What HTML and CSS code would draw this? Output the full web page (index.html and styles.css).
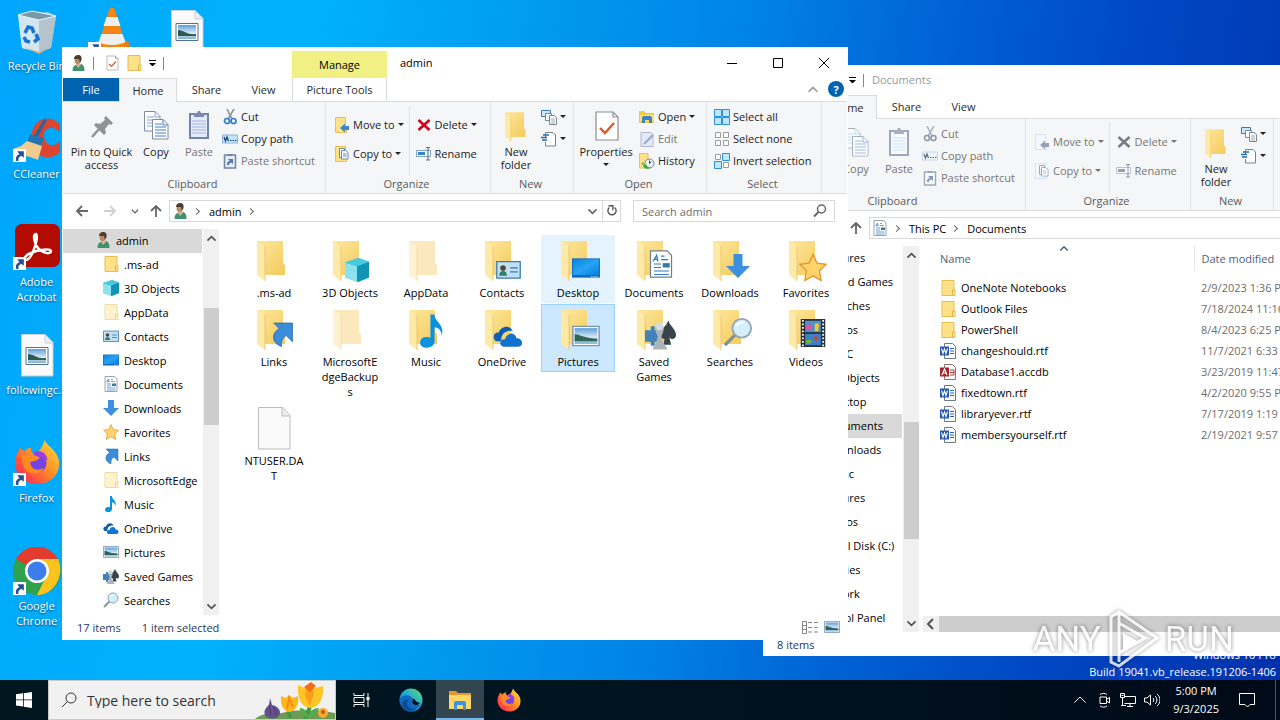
FILE: index.html
```html
<!DOCTYPE html>
<html lang="en">
<head>
  <meta charset="UTF-8">
  <meta name="viewport" content="width=device-width, initial-scale=1.0">
  <title>Desktop</title>
  <link rel="stylesheet" href="styles.css">
</head>
<body>
  <!-- Icon sprite -->
  <svg class="sprite" aria-hidden="true">
    <defs>
      <linearGradient id="g-folder" x1="0" y1="0" x2="1" y2="1"><stop offset="0" stop-color="#ffe79c"/><stop offset="1" stop-color="#f3cb5d"/></linearGradient>
      <linearGradient id="g-sky" x1="0" y1="0" x2="0" y2="1"><stop offset="0" stop-color="#5f9fdc"/><stop offset="0.6" stop-color="#dcecf7"/><stop offset="1" stop-color="#7fb0cf"/></linearGradient>
      <linearGradient id="g-fox" x1="1" y1="0" x2="0" y2="1"><stop offset="0" stop-color="#ffe23c"/><stop offset="0.45" stop-color="#ff9125"/><stop offset="0.8" stop-color="#ff3f48"/><stop offset="1" stop-color="#e5208a"/></linearGradient>
      <linearGradient id="g-edge" x1="0" y1="1" x2="1" y2="0"><stop offset="0" stop-color="#0b59b0"/><stop offset="0.5" stop-color="#22a8dd"/><stop offset="1" stop-color="#5fdc62"/></linearGradient>
      <linearGradient id="g-key" x1="0" y1="0" x2="1" y2="1"><stop offset="0" stop-color="#0a84e0"/><stop offset="0.5" stop-color="#25a3f5"/><stop offset="1" stop-color="#0a7edb"/></linearGradient>
    </defs>
    <symbol id="person" viewBox="0 0 16 16"><path d="M2.500 16c0-4 1.500-6 4.500-6.500L11 9c2.500.5 3.500 3 3.500 7z" fill="#3f9172"/><path d="M6 8h4l1 2-3 3-2-3z" fill="#d9b08c"/><ellipse cx="7.500" cy="5" rx="3" ry="4" fill="#b98a68"/><path d="M4 4c0-3 2-4 4-4 3 0 4 2 3.500 5L10 8 9 4z" fill="#4d3c31"/></symbol>
    <symbol id="folder" viewBox="0 0 16 16"><path d="M2 .5h12V10h1v5.500H2z" fill="#ffe187" stroke="#e6bd55"/><path d="M12.500 15v-5H14" fill="none" stroke="#e0b548"/></symbol>
    <symbol id="folder-pale" viewBox="0 0 16 16"><path d="M2 .5h12V10h1v5.500H2z" fill="#fff2cc" stroke="#ecdba6"/><path d="M12.500 15v-5H14" fill="none" stroke="#e8d49a"/></symbol>
    <symbol id="folder48" viewBox="0 0 48 48"><path d="M7 5h26v22l2 2v10H15z" fill="url(#g-folder)"/><path d="M7 5l8 5v35l-8-6z" fill="#ffe9a6"/><path d="M15 10v35" stroke="#e5bd57" stroke-width=".7"/></symbol>
    <symbol id="folder48-pale" viewBox="0 0 48 48"><path d="M7 5h26v22l2 2v10H15z" fill="#fbe9bd"/><path d="M7 5l8 5v35l-8-6z" fill="#fff2d2"/><path d="M15 10v35" stroke="#ecd8a2" stroke-width=".7"/></symbol>
    <symbol id="cube" viewBox="0 0 16 16"><path d="M0 3l9-3 7 2.500v10.500L9 16 0 13z" fill="#27b5d0"/><path d="M0 3l8 2.500V16L0 13z" fill="#8be3ef"/><path d="M8 5.500l8-3V13l-8 3z" fill="#1393b4"/><path d="M0 3l9-3 7 2.500-8 3z" fill="#48cbdf"/></symbol>
    <symbol id="contact" viewBox="0 0 16 16"><path d="M.5 3h15v10.500H.5z" fill="#bfe0f5" stroke="#3d7ba8" stroke-width=".8"/><path d="M2 12c0-2 1-3 2.500-3S7 10 7 12z" fill="#2f8068"/><circle cx="4.500" cy="7" r="1.800" fill="#5a4332"/><path d="M9 7h5M9 9.500h5" stroke="#3d7ba8" stroke-width=".8"/></symbol>
    <symbol id="desk" viewBox="0 0 16 16"><path d="M0 2.500h16v11H0z" fill="#0a6cc0"/><path d="M.5 3h15v9H.5z" fill="url(#g-key)"/><path d="M11 13h4" stroke="#fff" stroke-width=".6" stroke-dasharray=".6 .6"/></symbol>
    <symbol id="doc" viewBox="0 0 16 16"><path d="M2 .5h9.500L14 3v12.500H2z" fill="#fff" stroke="#72808c" stroke-width=".7"/><path d="M3.500 6.500L5.500 3l.8 3.500M4 5.300h2M8 3.500h2M8 5.500h4M4 8h4M4 10h4M4 12h8.500M4 14h8.500" fill="none" stroke="#2b7cc0" stroke-width=".7"/><path d="M9 7.500h4V10H9z" fill="#3878a8"/></symbol>
    <symbol id="down" viewBox="0 0 16 16"><path d="M5 0h6v8h5l-8 8-8-8h5z" fill="#3d8fe0"/></symbol>
    <symbol id="star" viewBox="0 0 16 16"><path d="M8 .5l2.300 5 5.200.7-3.800 3.700 1 5.600L8 12.800 3.300 15.500l1-5.600L.5 6.200l5.200-.7z" fill="#ffd36a" stroke="#e2922e" stroke-width=".7"/></symbol>
    <symbol id="linkarrow" viewBox="0 0 16 16"><path d="M3 1h12v12l-4-4c-3 2-3 4-3 7C2 14 1 8 6.500 4.500z" fill="#3a8ddb" stroke="#2567a5" stroke-width=".5"/></symbol>
    <symbol id="music" viewBox="0 0 16 16"><path d="M7 0h2c0 4 5 4.500 3.500 10-.5-3-2-3.500-3.500-3.800V13c0 4-7 4-7 .8C2 11 5 10.500 7 11.300z" fill="#0a93dd"/></symbol>
    <symbol id="cloud" viewBox="0 0 16 16"><path d="M1.500 11C-1 9 1 6 3 6.500 4 3 9 2 10.500 5.500 6 5 4 8 4.500 11z" fill="#0c5fb3"/><path d="M5.500 14C2.500 13 4 9.500 6.500 10 7 6.500 12 6 12.500 9.500c3-.5 4.500 4 1 4.500z" fill="#1272cf"/></symbol>
    <symbol id="picture" viewBox="0 0 16 16"><path d="M.5 2.500h15v11H.5z" fill="#fff" stroke="#7d96aa" stroke-width=".8"/><path d="M1.500 3.500h13v9h-13z" fill="url(#g-sky)"/><path d="M1.500 7c3 0 4 2 13 2.500V11h-13z" fill="#2f6659"/></symbol>
    <symbol id="games" viewBox="0 0 16 16"><path d="M0 6h3V4h2v2h3v6H5v2H3v-2H0z" fill="#4282ba"/><path d="M12 1c1 3 4 4.500 4 7.500 0 2-2.500 3-3.500 1l1 4h-4z" fill="#39434a"/><path d="M12 1c-1 3-4 4.500-4 7.500 0 2 3 3 4 1z" fill="#39434a"/><path d="M4 16c0-2 2-2 2.500-7C4 5 6 2.500 7.500 2.500S11 5 8.500 9c.5 5 3 5 3 7z" fill="#a9b5bb"/><circle cx="7.500" cy="4" r="2" fill="#d5dde1"/></symbol>
    <symbol id="search" viewBox="0 0 16 16"><path d="M1 15l6-6" stroke="#82909c" stroke-width="1.800"/><circle cx="10" cy="6" r="5" fill="#d3effc" stroke="#91a5b3"/><path d="M7 5c1-2 3-2 4-2" stroke="#fff" fill="none"/></symbol>
    <symbol id="film" viewBox="0 0 16 16"><path d="M1 0h14v16H1z" fill="#26303b"/><path d="M3.500 1h9v6.500h-9z" fill="#4d91ce"/><path d="M3.500 8.500h9V15h-9z" fill="#4080c8"/><path d="M2.200.5v15M13.800.5v15" stroke="#fff" stroke-dasharray="1 1"/><path d="M4 4l3-1v3H4z" fill="#ef4c97"/><path d="M9 2.500h2.500L11 7H9z" fill="#f1c72f"/><path d="M8 10h3l-1 3z" fill="#c94930"/><path d="M4 12h3v2H4z" fill="#6cb248"/></symbol>
    <symbol id="page" viewBox="0 0 48 48"><path d="M8.500 3.500H33l7 8v33.500H8.500z" fill="#fafafa" stroke="#bcbcbc"/><path d="M32 3.500v8.500h8" fill="#eee" stroke="#bcbcbc"/></symbol>
    <symbol id="image-page" viewBox="0 0 48 48"><path d="M8.500 3.500H32l8 8v33.500H8.500z" fill="#fafafa" stroke="#c6d0d6"/><path d="M32 3.500V12h8" fill="#e6eef4" stroke="#c6d0d6"/><path d="M13 16.500h22v17H13z" fill="#fff" stroke="#52719a"/><path d="M15 18h18v14H15z" fill="url(#g-sky)"/><path d="M15 23c6 0 8 5 18 4v2H15z" fill="#2d5b50"/></symbol>
    <symbol id="check-page" viewBox="0 0 16 16"><path d="M3 1h8.500L14 3.500V15H3z" fill="#fff" stroke="#8a8d92" stroke-width=".6"/><path d="M11.500 1v2.500H14" fill="none" stroke="#8a8d92" stroke-width=".6"/><path d="M5 9l2.500 2.500 4.500-5" fill="none" stroke="#e0562b" stroke-width="1.200"/></symbol>
    <symbol id="pin" viewBox="0 0 32 32"><path d="M20 6l7 7-2 2-2-1-4 5 1 4-2 2-10-10 2-2 4 1 5-4-1-2z" fill="#909497"/><path d="M13 19l-7 8" stroke="#909497" stroke-width="2.500"/></symbol>
    <symbol id="copy" viewBox="0 0 32 32"><path d="M4.500 1.500H15l5 5V21H4.500z" fill="#fff" stroke="#7e8ca0"/><path d="M15 1.500V7h5M7 7h7M7 10h10M7 13h10M7 16h10" stroke="#82a0dd" fill="none"/><path d="M12.500 9.500H23l5 5V29H12.500z" fill="#fff" stroke="#7e8ca0"/><path d="M23 9.500V15h5M15 14h7M15 17h11M15 20h11M15 23h11M15 26h11" stroke="#457bd0" fill="none"/></symbol>
    <symbol id="paste" viewBox="0 0 32 32"><path d="M7 4h18v24H7z" fill="#e3eafb" stroke="#7283a8" stroke-width="2"/><path d="M11 3h3l1-2h2l1 2h3v4H11z" fill="#7b8bab"/><path d="M9 11h14M9 14h14M9 17h14M9 20h14M9 23h14" stroke="#a9b7d6"/></symbol>
    <symbol id="cut" viewBox="0 0 16 16"><path d="M5 0l5 10M12 0L6 10" stroke="#8c9196" stroke-width="1.600"/><circle cx="5" cy="12" r="2.500" fill="none" stroke="#2b7fc7" stroke-width="1.700"/><circle cx="11.500" cy="12" r="2.500" fill="none" stroke="#2b7fc7" stroke-width="1.700"/></symbol>
    <symbol id="path" viewBox="0 0 16 16"><path d="M.5 4h15v8H.5z" fill="#c3e4fa" stroke="#86b6dc"/><path d="M2 6l1.500 4L5 6l1.500 4M8 9.500h1.500M10.500 9.500H12M13 9.500h1.500" stroke="#123e6b" stroke-width="1.200" fill="none"/></symbol>
    <symbol id="paste-link" viewBox="0 0 16 16"><path d="M2.500 2h11v13h-11z" fill="#e5ebf8" stroke="#7184a9" stroke-width="1.500"/><path d="M5.500 1h5v2h-5z" fill="#7184a9"/><path d="M5 12c0-3 1-4 3-4L6 6h5v5L9.500 9.500C7 10 7 11 7 12z" fill="#5a73a8"/></symbol>
    <symbol id="move" viewBox="0 0 16 16"><path d="M1.500.5h10V12h1v3.500h-11z" fill="#ffe187" stroke="#e8c15d"/><path d="M15 9v4h-4v2.500L6 11l5-4.500V9z" fill="#3a87cc"/></symbol>
    <symbol id="copyto" viewBox="0 0 16 16"><path d="M1.500.5h10V12h1v3.500h-11z" fill="#ffe187" stroke="#e8c15d"/><path d="M5.500 2.500h5v9h-5z" fill="#fff" stroke="#6e88a7"/><path d="M7.500 4.500h4l2.500 2V13H7.500z" fill="#fff" stroke="#6e88a7"/><path d="M9 8h3.500M9 10h3.500" stroke="#4b82cf"/></symbol>
    <symbol id="delete" viewBox="0 0 16 16"><path d="M2.500 3l11 10M13.500 3L2.500 13" stroke="currentColor" stroke-width="2.700"/></symbol>
    <symbol id="rename" viewBox="0 0 16 16"><path d="M.5 4.500h14v6H.5z" fill="#fff" stroke="#7ba6cb"/><path d="M2 6h7v3H2z" fill="#3b83c5"/><path d="M10 1.500h4M12 1.500v12.500M10 14h4" stroke="#667784" stroke-width="1.200"/></symbol>
    <symbol id="new-item" viewBox="0 0 16 16"><path d="M.5 1.500h9v6h-9z" fill="#cce7f8" stroke="#3a7cab"/><path d="M4.500 4.500h6v7h-6z" fill="#fff" stroke="#788994"/><path d="M8.500 6.500H13l2.500 2v7h-7z" fill="#fff" stroke="#788994"/><path d="M10 10h4M10 12h4M10 14h4" stroke="#9ba9b3"/></symbol>
    <symbol id="easy" viewBox="0 0 16 16"><path d="M4.500 6V1.500H12L14.500 4v11h-10V11" fill="#fff" stroke="#75838e"/><path d="M2 4h6M0 6.500h6M1 9h5" stroke="#276ca6" stroke-width="1.300"/></symbol>
    <symbol id="open" viewBox="0 0 16 16"><path d="M0 2h5l1.500 2H15v10H0z" fill="#f3c94c"/><path d="M1 6h14v6H1z" fill="#ffdf78"/><path d="M3 14V9c0-1 1-2 2-2h6c1 0 2 1 2 2v5h-3v-3H6v3z" fill="#3983c8"/></symbol>
    <symbol id="edit" viewBox="0 0 16 16"><path d="M2 1.500h10l2 2v12H2z" fill="#e4e9f6" stroke="#aeb9cf"/><path d="M5 13L14 4" stroke="#97a7c7" stroke-width="2"/></symbol>
    <symbol id="history" viewBox="0 0 16 16"><path d="M.5.5H9V11h1.500v4H.5z" fill="#ffe187" stroke="#e8c15d"/><circle cx="10.500" cy="10.500" r="4.500" fill="#ebf3f5" stroke="#71878a"/><path d="M10.500 7.500v3l2-2" stroke="#445" fill="none"/><path d="M8 6L4 9l1 3 2-1c1 3 3 4 5 3.500-5 3-8 0-8-3l-2-.5z" fill="#2eab46"/></symbol>
    <symbol id="sel-all" viewBox="0 0 16 16"><path d="M.5.5h7v7h-7zM8.500.5h7v7h-7zM.5 8.500h7v7h-7zM8.500 8.500h7v7h-7z" fill="#bde5fb" stroke="#2f91d5"/></symbol>
    <symbol id="sel-none" viewBox="0 0 16 16"><path d="M1.500 1.500h5v5h-5zM9.500 1.500h5v5h-5zM1.500 9.500h5v5h-5zM9.500 9.500h5v5h-5z" fill="#fff" stroke="#9b9b9b"/></symbol>
    <symbol id="sel-inv" viewBox="0 0 16 16"><path d="M1.500 1.500h5v5h-5zM9.500 9.500h5v5h-5z" fill="#fff" stroke="#9b9b9b"/><path d="M8.500.5h7v7h-7zM.5 8.500h7v7h-7z" fill="#bde5fb" stroke="#2f91d5"/></symbol>
    <symbol id="word" viewBox="0 0 16 16"><path d="M4.500.5h8l3 3v12h-11z" fill="#fff" stroke="#6d7986"/><path d="M10 5.500h4M10 8h4M10 10.500h4" stroke="#2b62b5"/><path d="M0 3.500h9v9H0z" fill="#2458ae"/><path d="M1.500 5.500L3 10.500 4.500 6 6 10.500l1.500-5" stroke="#fff" fill="none" stroke-width="1.100"/></symbol>
    <symbol id="access" viewBox="0 0 16 16"><path d="M4.500.5h8l3 3v12h-11z" fill="#fff" stroke="#8d6e72"/><path d="M10 6h4v5h-4M10 8.500h4" stroke="#a4373a" fill="none"/><path d="M0 3.500h9v9H0z" fill="#a4262c"/><path d="M2 11l2.500-6L7 11M3 9h3" stroke="#fff" fill="none" stroke-width="1.200"/></symbol>
    <symbol id="arrow" viewBox="0 0 16 16"><path d="M14 8H3M8 3L3 8l5 5" fill="none" stroke="currentColor" stroke-width="1.800"/></symbol>
    <symbol id="chev" viewBox="0 0 16 16"><path d="M3 6l5 5 5-5" fill="none" stroke="currentColor" stroke-width="2"/></symbol>
    <symbol id="refresh" viewBox="0 0 16 16"><path d="M5 4a4.700 4.700 0 1 0 6 0" fill="none" stroke="currentColor" stroke-width="1.600"/><path d="M4 2h5v5" fill="none" stroke="currentColor" stroke-width="1.600"/></symbol>
    <symbol id="lens" viewBox="0 0 16 16"><circle cx="9.500" cy="6" r="4" fill="none" stroke="currentColor" stroke-width="1.500"/><path d="M6.500 9L2 13.500" stroke="currentColor" stroke-width="2"/></symbol>
    <symbol id="lnk" viewBox="0 0 12 12"><path d="M0 0h12v12H0z" fill="#fff"/><path d="M3 11C2 7 4 5 6 5L4 2h6v6L8 6.500C5 7 5 9 5 11z" fill="#284f96"/></symbol>
    <symbol id="firefox" viewBox="0 0 48 48"><path d="M32 1c2 6 14 11 15 23 1 14-10 23-23 23S1 37 1 24C1 18 4 15 6 9l5 4c2-3 4-4 7-4-1 2 0 4 2 6l6-3c3-2 4-6 6-11z" fill="url(#g-fox)"/><circle cx="24" cy="25" r="10" fill="#7542e5"/><path d="M8 17c7-4 12-1 19 2-2 4-7 4-10 5 0 8 8 10 14 6-3 8-18 9-21-2-1-4-2-7-2-11z" fill="#ff8a22"/><path d="M20 14c7-4 15 1 15 9-3-4-8-5-12-5z" fill="#9c3de0"/></symbol>
    <symbol id="edge" viewBox="0 0 24 24"><circle cx="12" cy="12" r="11.500" fill="url(#g-edge)"/><path d="M.7 13C1 8 7 6 11 8c3 1.500 3 4 2 5.500-1 3 3 5 8.500 3-4 8-15 8-18 2C2 17 .7 15 .7 13z" fill="#1068c2"/><path d="M9.500 12c-4 4 1 11 8 9-4 3-12 2-14-3-1-4 2-7 6-6z" fill="#0d4a94"/><path d="M13 14c1-1 1-2 0-3 4-1 2 3 8 4-2 3-7 3-8-1z" fill="#00141f"/></symbol>
    <symbol id="explorer" viewBox="0 0 24 24"><path d="M1 3h7l2 2h13v4H1z" fill="#e8962e"/><path d="M1 7h22v14H1z" fill="#ffd766"/><path d="M6 22v-7c0-1 1-2 2-2h8c1 0 2 1 2 2v7h-3v-5H9v5z" fill="#3f93dc"/></symbol>
  </svg>

  <main class="desktop">
    <!-- Desktop shortcuts -->
    <div class="shortcuts">
      <a class="shortcut" href="#"><svg viewBox="0 0 48 48"><path d="M5 8l30-3 8 4-5 32-12 4L9 41z" fill="#a9d3ea" opacity=".85"/><path d="M5 8l21 4 2 34L9 41z" fill="#d3e7f1"/><path d="M26 12l17-3-5 32-12 4z" fill="#b4c3cc"/><path d="M5 8l14-4 24 5-17 4z" fill="#7899aa" stroke="#e8f4fa"/><path d="M11 40l15 5 12-5-12 7z" fill="#d4a98a"/><path d="M12 26l3-6 4 1 2 5M23 27l2 5-4 3M17 35l-4-1-2-4" fill="none" stroke="#1674d0" stroke-width="3.500"/></svg><span>Recycle Bin</span></a>
      <a class="shortcut" href="#"><svg viewBox="0 0 48 48"><path d="M40 9C24-5 8 10 12 28c3 16 20 18 28 9V26c-6 7-15 5-16-5-1-8 9-11 16-4z" fill="#dc4530" transform="translate(7 0)"/><path d="M31 4l3 1-10 19-4-2z" fill="#336390"/><path d="M17 19l14 4-3 8-14-4z" fill="#2374b4"/><path d="M14 26l15 5-4 14-8-3-12-3-5-5 8-3z" fill="#f2cc8f"/><use href="#lnk" x="0" y="34" width="13" height="13"/></svg><span>CCleaner</span></a>
      <a class="shortcut" href="#"><svg viewBox="0 0 48 48"><rect x="2" y="1" width="45" height="43" rx="7" fill="#b30b00"/><path d="M23 11c-4 0-1 11 2 14 4 5 13 7 13 3 0-3-14-1-20 2-6 2-8 7-5 7 6 0 13-23 10-26z" fill="none" stroke="#fff" stroke-width="2.500"/><use href="#lnk" x="0" y="34" width="13" height="13"/></svg><span>Adobe Acrobat</span></a>
      <a class="shortcut" href="#"><svg><use href="#image-page"/></svg><span>followingc...</span></a>
      <a class="shortcut" href="#"><svg viewBox="0 0 48 48"><use href="#firefox" x="1" width="46" height="46"/><use href="#lnk" x="0" y="34" width="13" height="13"/></svg><span>Firefox</span></a>
      <a class="shortcut" href="#"><svg viewBox="0 0 48 48"><circle cx="24" cy="24" r="24" fill="#30a14f"/><path d="M24 24L3 12A24 24 0 0 1 45 12z" fill="#e33b2e"/><path d="M24 12h21c7 15-3 36-21 36l10-20z" fill="#fcc31e"/><circle cx="24" cy="24" r="12" fill="#fff"/><circle cx="24" cy="24" r="9.500" fill="#3b7ded"/><use href="#lnk" x="0" y="35" width="13" height="13"/></svg><span>Google Chrome</span></a>
      <a class="shortcut" href="#"><svg viewBox="0 0 48 48"><path d="M8 34h32l5 12H3z" fill="#ee7712"/><path d="M21 3c1-3 5-3 6 0l11 36c-6 5-22 5-28 0z" fill="#f58413"/><path d="M18.500 10h11l3 9h-17zM13.500 27h21l3 8c-7 4-20 4-27 0z" fill="#efefef"/><use href="#lnk" x="0" y="35" width="13" height="13"/></svg></a>
      <span class="shortcut"></span><span class="shortcut"></span><span class="shortcut"></span><span class="shortcut"></span><span class="shortcut"></span>
      <a class="shortcut" href="#"><svg><use href="#image-page"/></svg></a>
    </div>

    <div class="build">Windows 10 Pro<br>Build 19041.vb_release.191206-1406</div>

    <!-- Documents window -->
    <section class="window window-back">
      <header class="titlebar">
        <div class="quick"><svg><use href="#doc"/></svg><i></i><svg><use href="#check-page"/></svg><svg><use href="#folder"/></svg><b class="drop"></b><i></i></div>
        <h1>Documents</h1>
      </header>
      <nav class="tabs">
        <button class="file">File</button>
        <button class="current">Home</button>
        <button>Share</button>
        <button>View</button>
      </nav>
      <div class="ribbon">
        <div class="group clipboard">
          <div class="tools">
            <button class="big wide"><svg><use href="#pin"/></svg>Pin to Quick access</button>
            <button class="big" disabled><svg><use href="#copy"/></svg>Copy</button>
            <button class="big" disabled><svg><use href="#paste"/></svg>Paste</button>
            <div class="stack">
              <button disabled><svg><use href="#cut"/></svg>Cut</button>
              <button disabled><svg><use href="#path"/></svg>Copy path</button>
              <button disabled><svg><use href="#paste-link"/></svg>Paste shortcut</button>
            </div>
          </div>
          <h2>Clipboard</h2>
        </div>
        <div class="group organize">
          <div class="tools">
            <div class="stack loose">
              <button class="caret" disabled><svg><use href="#move"/></svg>Move to</button>
              <button class="caret" disabled><svg><use href="#copyto"/></svg>Copy to</button>
            </div>
            <div class="stack loose ruled">
              <button class="caret red" disabled><svg><use href="#delete"/></svg>Delete</button>
              <button disabled><svg><use href="#rename"/></svg>Rename</button>
            </div>
          </div>
          <h2>Organize</h2>
        </div>
        <div class="group new">
          <div class="tools">
            <button class="big"><svg viewBox="4 2 36 44"><use href="#folder48" width="48" height="48"/></svg>New folder</button>
            <div class="stack">
              <button class="caret" aria-label="New item"><svg><use href="#new-item"/></svg></button>
              <button class="caret" aria-label="Easy access"><svg><use href="#easy"/></svg></button>
            </div>
          </div>
          <h2>New</h2>
        </div>
      </div>
      <div class="location">
        <button aria-label="Back"><svg><use href="#arrow"/></svg></button>
        <button aria-label="Forward" disabled><svg class="flip"><use href="#arrow"/></svg></button>
        <button class="recent" aria-label="Recent locations"><svg><use href="#chev"/></svg></button>
        <button aria-label="Up"><svg class="up"><use href="#arrow"/></svg></button>
        <div class="address"><svg><use href="#doc"/></svg><em></em><a href="#">This PC</a><em></em><a href="#">Documents</a></div>
      </div>
      <div class="body">
        <ul class="tree">
          <li><a href="#"><svg><use href="#picture"/></svg>Pictures</a></li>
          <li><a href="#"><svg><use href="#games"/></svg>Saved Games</a></li>
          <li><a href="#"><svg><use href="#search"/></svg>Searches</a></li>
          <li><a href="#"><svg><use href="#film"/></svg>Videos</a></li>
          <li class="root"><a href="#"><svg><use href="#desk"/></svg>This PC</a></li>
          <li><a href="#"><svg><use href="#cube"/></svg>3D Objects</a></li>
          <li><a href="#"><svg><use href="#desk"/></svg>Desktop</a></li>
          <li class="selected"><a href="#"><svg><use href="#doc"/></svg>Documents</a></li>
          <li><a href="#"><svg><use href="#down"/></svg>Downloads</a></li>
          <li><a href="#"><svg><use href="#music"/></svg>Music</a></li>
          <li><a href="#"><svg><use href="#picture"/></svg>Pictures</a></li>
          <li><a href="#"><svg><use href="#film"/></svg>Videos</a></li>
          <li><a href="#"><svg><use href="#desk"/></svg>Local Disk (C:)</a></li>
          <li class="root"><a href="#"><svg><use href="#folder"/></svg>Libraries</a></li>
          <li class="root"><a href="#"><svg><use href="#desk"/></svg>Network</a></li>
          <li class="root"><a href="#"><svg><use href="#desk"/></svg>Control Panel</a></li>
        </ul>
        <div class="scrollbar low"><svg class="rot"><use href="#chev"/></svg><span></span><svg><use href="#chev"/></svg></div>
        <div class="details">
          <table>
            <thead>
              <tr><th><svg class="rot sort"><use href="#chev"/></svg>Name</th><th>Date modified</th></tr>
            </thead>
            <tbody>
              <tr><td><svg><use href="#folder"/></svg>OneNote Notebooks</td><td>2/9/2023 1:36 PM</td></tr>
              <tr><td><svg><use href="#folder"/></svg>Outlook Files</td><td>7/18/2024 11:16 AM</td></tr>
              <tr><td><svg><use href="#folder"/></svg>PowerShell</td><td>8/4/2023 6:25 PM</td></tr>
              <tr><td><svg><use href="#word"/></svg>changeshould.rtf</td><td>11/7/2021 6:33 PM</td></tr>
              <tr><td><svg><use href="#access"/></svg>Database1.accdb</td><td>3/23/2019 11:47 AM</td></tr>
              <tr><td><svg><use href="#word"/></svg>fixedtown.rtf</td><td>4/2/2020 9:55 PM</td></tr>
              <tr><td><svg><use href="#word"/></svg>libraryever.rtf</td><td>7/17/2019 1:19 PM</td></tr>
              <tr><td><svg><use href="#word"/></svg>membersyourself.rtf</td><td>2/19/2021 9:57 AM</td></tr>
            </tbody>
          </table>
          <div class="hscroll"><svg class="left"><use href="#chev"/></svg><span></span></div>
        </div>
      </div>
      <footer class="status"><span>8 items</span></footer>
    </section>

    <!-- admin window -->
    <section class="window window-front">
      <header class="titlebar">
        <div class="quick"><svg><use href="#person"/></svg><i></i><svg><use href="#check-page"/></svg><svg><use href="#folder"/></svg><b class="drop"></b><i></i></div>
        <div class="context">Manage</div>
        <h1>admin</h1>
        <div class="controls">
          <button aria-label="Minimize"><svg viewBox="0 0 10 10"><path d="M0 5.500h10"/></svg></button>
          <button aria-label="Maximize"><svg viewBox="0 0 10 10"><path d="M.5.5h9v9h-9z"/></svg></button>
          <button aria-label="Close"><svg viewBox="0 0 10 10"><path d="M0 0l10 10M10 0L0 10"/></svg></button>
        </div>
      </header>
      <nav class="tabs">
        <button class="file">File</button>
        <button class="current">Home</button>
        <button>Share</button>
        <button>View</button>
        <button class="picture-tools">Picture Tools</button>
        <button class="collapse" aria-label="Collapse ribbon"><svg class="rot"><use href="#chev"/></svg></button>
        <button class="help">?</button>
      </nav>
      <div class="ribbon">
        <div class="group clipboard">
          <div class="tools">
            <button class="big wide"><svg><use href="#pin"/></svg>Pin to Quick access</button>
            <button class="big"><svg><use href="#copy"/></svg>Copy</button>
            <button class="big" disabled><svg><use href="#paste"/></svg>Paste</button>
            <div class="stack">
              <button><svg><use href="#cut"/></svg>Cut</button>
              <button><svg><use href="#path"/></svg>Copy path</button>
              <button disabled><svg><use href="#paste-link"/></svg>Paste shortcut</button>
            </div>
          </div>
          <h2>Clipboard</h2>
        </div>
        <div class="group organize">
          <div class="tools">
            <div class="stack loose">
              <button class="caret"><svg><use href="#move"/></svg>Move to</button>
              <button class="caret"><svg><use href="#copyto"/></svg>Copy to</button>
            </div>
            <div class="stack loose ruled">
              <button class="caret red"><svg><use href="#delete"/></svg>Delete</button>
              <button><svg><use href="#rename"/></svg>Rename</button>
            </div>
          </div>
          <h2>Organize</h2>
        </div>
        <div class="group new">
          <div class="tools">
            <button class="big"><svg viewBox="4 2 36 44"><use href="#folder48" width="48" height="48"/></svg>New folder</button>
            <div class="stack">
              <button class="caret" aria-label="New item"><svg><use href="#new-item"/></svg></button>
              <button class="caret" aria-label="Easy access"><svg><use href="#easy"/></svg></button>
            </div>
          </div>
          <h2>New</h2>
        </div>
        <div class="group opening">
          <div class="tools">
            <button class="big caret"><svg><use href="#check-page"/></svg>Properties</button>
            <div class="stack">
              <button class="caret"><svg><use href="#open"/></svg>Open</button>
              <button disabled><svg><use href="#edit"/></svg>Edit</button>
              <button><svg><use href="#history"/></svg>History</button>
            </div>
          </div>
          <h2>Open</h2>
        </div>
        <div class="group select">
          <div class="tools">
            <div class="stack">
              <button><svg><use href="#sel-all"/></svg>Select all</button>
              <button><svg><use href="#sel-none"/></svg>Select none</button>
              <button><svg><use href="#sel-inv"/></svg>Invert selection</button>
            </div>
          </div>
          <h2>Select</h2>
        </div>
      </div>
      <div class="location">
        <button aria-label="Back"><svg><use href="#arrow"/></svg></button>
        <button aria-label="Forward" disabled><svg class="flip"><use href="#arrow"/></svg></button>
        <button class="recent" aria-label="Recent locations"><svg><use href="#chev"/></svg></button>
        <button aria-label="Up"><svg class="up"><use href="#arrow"/></svg></button>
        <div class="address">
          <svg><use href="#person"/></svg><em></em><a href="#">admin</a><em></em>
          <button class="history" aria-label="Previous locations"><svg><use href="#chev"/></svg></button>
          <button class="refresh" aria-label="Refresh"><svg><use href="#refresh"/></svg></button>
        </div>
        <label class="search"><input type="text" placeholder="Search admin" aria-label="Search admin"><svg><use href="#lens"/></svg></label>
      </div>
      <div class="body">
        <ul class="tree">
          <li class="root selected"><a href="#"><svg><use href="#person"/></svg>admin</a></li>
          <li><a href="#"><svg><use href="#folder"/></svg>.ms-ad</a></li>
          <li><a href="#"><svg><use href="#cube"/></svg>3D Objects</a></li>
          <li><a href="#"><svg><use href="#folder-pale"/></svg>AppData</a></li>
          <li><a href="#"><svg><use href="#contact"/></svg>Contacts</a></li>
          <li><a href="#"><svg><use href="#desk"/></svg>Desktop</a></li>
          <li><a href="#"><svg><use href="#doc"/></svg>Documents</a></li>
          <li><a href="#"><svg><use href="#down"/></svg>Downloads</a></li>
          <li><a href="#"><svg><use href="#star"/></svg>Favorites</a></li>
          <li><a href="#"><svg><use href="#linkarrow"/></svg>Links</a></li>
          <li><a href="#"><svg><use href="#folder-pale"/></svg>MicrosoftEdge</a></li>
          <li><a href="#"><svg><use href="#music"/></svg>Music</a></li>
          <li><a href="#"><svg><use href="#cloud"/></svg>OneDrive</a></li>
          <li><a href="#"><svg><use href="#picture"/></svg>Pictures</a></li>
          <li><a href="#"><svg><use href="#games"/></svg>Saved Games</a></li>
          <li><a href="#"><svg><use href="#search"/></svg>Searches</a></li>
        </ul>
        <div class="scrollbar"><svg class="rot"><use href="#chev"/></svg><span></span><svg><use href="#chev"/></svg></div>
        <div class="files">
          <a href="#"><svg><use href="#folder48"/></svg>.ms-ad</a>
          <a href="#"><svg viewBox="0 0 48 48"><use href="#folder48"/><use href="#cube" x="19" y="22" width="24" height="24"/></svg>3D Objects</a>
          <a href="#"><svg><use href="#folder48-pale"/></svg>AppData</a>
          <a href="#"><svg viewBox="0 0 48 48"><use href="#folder48"/><use href="#contact" x="18" y="21" width="25" height="25"/></svg>Contacts</a>
          <a href="#" class="hover"><svg viewBox="0 0 48 48"><use href="#folder48"/><use href="#desk" x="18" y="18" width="28" height="28"/></svg>Desktop</a>
          <a href="#"><svg viewBox="0 0 48 48"><use href="#folder48"/><use href="#doc" x="17" y="14" width="28" height="28"/></svg>Documents</a>
          <a href="#"><svg viewBox="0 0 48 48"><use href="#folder48"/><use href="#down" x="20" y="18" width="24" height="24"/></svg>Downloads</a>
          <a href="#"><svg viewBox="0 0 48 48"><use href="#folder48"/><use href="#star" x="17" y="17" width="28" height="29"/></svg>Favorites</a>
          <a href="#"><svg viewBox="0 0 48 48"><use href="#folder48"/><use href="#linkarrow" x="19" y="15" width="25" height="28"/></svg>Links</a>
          <a href="#"><svg><use href="#folder48-pale"/></svg>MicrosoftE<br>dgeBackup<br>s</a>
          <a href="#"><svg viewBox="0 0 48 48"><use href="#folder48"/><use href="#music" x="14" y="9" width="33" height="34"/></svg>Music</a>
          <a href="#"><svg viewBox="0 0 48 48"><use href="#folder48"/><use href="#cloud" x="15" y="15" width="30" height="31"/></svg>OneDrive</a>
          <a href="#" class="chosen"><svg viewBox="0 0 48 48"><use href="#folder48"/><use href="#picture" x="18" y="17" width="28" height="28"/></svg>Pictures</a>
          <a href="#"><svg viewBox="0 0 48 48"><use href="#folder48"/><use href="#games" x="15" y="12" width="31" height="34"/></svg>Saved<br>Games</a>
          <a href="#"><svg viewBox="0 0 48 48"><use href="#folder48"/><use href="#search" x="17" y="12" width="30" height="30"/></svg>Searches</a>
          <a href="#"><svg viewBox="0 0 48 48"><use href="#folder48"/><use href="#film" x="17" y="14" width="28" height="28"/></svg>Videos</a>
          <a href="#"><svg><use href="#page"/></svg>NTUSER.DA<br>T</a>
        </div>
      </div>
      <footer class="status">
        <span>17 items</span><span>1 item selected</span>
        <button aria-label="Details view"><svg viewBox="0 0 16 16"><path d="M.5 2.500h4v12h-4zM1 6.500h3M1 10.500h3M6 3.500h4M12 3.500h4M6 8.500h4M12 8.500h4M6 13h4M12 13h4" fill="none" stroke="#858585"/></svg></button>
        <button aria-label="Large icons"><svg><use href="#picture"/></svg></button>
      </footer>
    </section>

    <div class="watermark">
      <span>ANY</span>
      <svg viewBox="0 0 56 62"><path d="M6 8L14 3l38 26-38 28-8-4zM14 14v30l26-15zM14 3v50" fill="none" stroke="#fff" stroke-width="3"/><path d="M18 24v18l16-9z" fill="#fff"/></svg>
      <span>RUN</span>
    </div>
  </main>

  <!-- Taskbar -->
  <footer class="taskbar">
    <button class="start" aria-label="Start"><svg viewBox="0 0 16 16"><path d="M0 2.300L7 1.300v6.200H0zM7.800 1.200L16 0v7.500H7.800zM0 8.300h7v6.300l-7-1zM7.800 8.300H16V16l-8.200-1.300z" fill="#fff"/></svg></button>
    <label class="find">
      <svg viewBox="0 0 16 16"><circle cx="10" cy="6" r="5" fill="none" stroke="#333"/><path d="M6.500 9.500L1 15" stroke="#333"/></svg>
      <input type="text" placeholder="Type here to search" aria-label="Type here to search">
      <svg class="flowers" viewBox="0 0 80 38"><path d="M0 38c8-7 18-5 27-6 15-4 34-3 53 0v6z" fill="#6b9b56"/><path d="M35 37l-3-18M50 38l8-20" stroke="#3e9a49" stroke-width="4"/><path d="M15 17l2 7c6 1 10 6 7 11-4 4-12 3-14-1-2-5 2-8 4-10z" fill="#65508f"/><path d="M14 24l2 10M18 25l4 9" stroke="#49386e" fill="none"/><path d="M26 15l5 2 3-3 4 3 5-2c1 8-2 15-8 16-6 0-10-7-9-16z" fill="#ffb719"/><path d="M32 28l2-11 4 9" stroke="#ef8c15" stroke-width="2" fill="none"/><path d="M43 4l7 3 4-5 6 5 8-2c1 13-4 21-12 22-9 0-14-9-13-23z" fill="#ffc524"/><path d="M51 7l6-2 2 8-4 12-5-10z" fill="#f99e18"/><path d="M49 6l6 5 6-6-5-4z" fill="#ed6f1b"/><path d="M45 27c5 0 7 4 8 9 2-6 6-9 11-9-1 6-5 9-11 9-5 0-8-3-8-9z" fill="#56aa48"/><circle cx="68" cy="32" r="5" fill="#faa92f"/><circle cx="68" cy="31" r="2" fill="#bf5624"/></svg>
    </label>
    <button class="app" aria-label="Task View"><svg class="small" viewBox="0 0 16 16"><path d="M.5 1v2.500h10V1M.5 5.500h10v5H.5zM.5 15v-2.500h10V15M14.500 1v14" fill="none" stroke="#fff"/><path d="M13 5h3v3h-3z" fill="#fff"/></svg></button>
    <button class="app" aria-label="Edge"><svg><use href="#edge"/></svg></button>
    <button class="app active" aria-label="File Explorer"><svg><use href="#explorer"/></svg></button>
    <button class="app" aria-label="Firefox"><svg><use href="#firefox"/></svg></button>
    <div class="tray">
      <svg viewBox="0 0 16 16"><path d="M2.500 10.500L8 5l5.500 5.500"/></svg>
      <svg viewBox="0 0 16 16"><path d="M4 5h6.500v6.500H4zM10.500 7.500l3-2v5.500l-3-2M4 2.500c2-1.500 5-1.500 7 0M4 14c2 1.500 5 1.500 7 0"/></svg>
      <svg viewBox="0 0 16 16"><path d="M5 4.500h10.500v7H4.500M10 11.500v3M7 14.500h6M.5 1.500h4v4h-4zM2.500 5.500v8M1 13.500h5M1.500 3.500h2"/></svg>
      <svg viewBox="0 0 16 16"><path d="M.5 6H3l3.500-3v10L3 10H.5zM9 6c1 1 1 3 0 4M11 4c2.500 2 2.500 6 0 8M13 2c4 3 4 9 0 12"/></svg>
      <time>5:00 PM<br>9/3/2025</time>
      <svg class="notes" viewBox="0 0 16 16"><path d="M.5 1.500h15v11H11L8.500 15 6 12.500H.5z"/></svg>
      <i></i>
    </div>
  </footer>
</body>
</html>
```
FILE: styles.css
```css
* {
  box-sizing: border-box;
}

body {
  margin: 0;
  height: 100vh;
  display: flex;
  flex-direction: column;
  overflow: hidden;
  font-family: "Open Sans", "Noto Sans", sans-serif;
  font-size: 11px;
  line-height: 15px;
  color: #000;
}

button, input {
  font: inherit;
  color: inherit;
  border: none;
  background: none;
  padding: 0;
  margin: 0;
}

a {
  color: inherit;
  text-decoration: none;
}

ul, h1, h2 {
  margin: 0;
  padding: 0;
  list-style: none;
  font-size: 11px;
  font-weight: normal;
}

svg {
  width: 16px;
  height: 16px;
  flex: none;
  display: block;
}

.sprite {
  position: absolute;
  width: 0;
  height: 0;
}

.rot { transform: rotate(180deg); }
.left { transform: rotate(90deg); }
.up { transform: rotate(90deg); }
.flip { transform: rotate(180deg); }

/* Desktop */
.desktop {
  flex: 1;
  position: relative;
  overflow: hidden;
  background: linear-gradient(100deg, #00a6fb 0%, #00b2fd 22%, #009cf0 38%, #0083e6 54%, #0062d4 68%, #0048c4 82%, #0031ad 100%);
}

.shortcuts {
  display: grid;
  grid-template-rows: repeat(6, 108px);
  grid-auto-columns: 75px;
  grid-auto-flow: column;
  margin-left: -1px;
}

.shortcut {
  display: flex;
  flex-direction: column;
  align-items: center;
  gap: 3px;
  padding: 7px 8px 0;
  color: #fff;
  text-align: center;
  text-shadow: 0 1px 2px rgba(0, 0, 0, 0.6);
}

.shortcut svg {
  width: 48px;
  height: 48px;
}

.shortcut span {
  max-width: 59px;
  display: flex;
  justify-content: center;
  white-space: nowrap;
}

.shortcut:nth-child(3) span,
.shortcut:nth-child(6) span {
  white-space: normal;
}

.build {
  position: absolute;
  right: 4px;
  bottom: 0;
  color: #fff;
  line-height: 17px;
  text-align: right;
}

/* Windows */
.window {
  position: absolute;
  width: 786px;
  height: 593px;
  display: flex;
  flex-direction: column;
  background: #fff;
  background-clip: padding-box;
  border: 1px solid transparent;
}

.window-front {
  left: 62px;
  top: 47px;
  border-color: #fff;
}

.window-back {
  left: 762px;
  top: 64px;
}

.titlebar {
  display: flex;
  height: 30px;
}

.titlebar h1 {
  padding: 0 13px;
  line-height: 30px;
}

.window-back h1 {
  padding: 0;
  color: #999;
}

.quick {
  display: flex;
  align-items: center;
  gap: 7px;
  width: 229px;
  padding-left: 7px;
}

.window-back .quick {
  width: 109px;
}

.quick i {
  width: 1px;
  height: 13px;
  background: #888;
}

.quick svg + i {
  margin-right: 3px;
}

.quick svg + svg {
  margin-left: -1px;
}

.drop {
  width: 7px;
  border-top: 1px solid #000;
  padding-top: 2px;
}

.drop::after {
  content: "";
  display: block;
  border: 3px solid transparent;
  border-top-color: #000;
  border-bottom: 0;
}

.context {
  width: 95px;
  margin-top: 3px;
  background: #f1f085;
  text-align: center;
  line-height: 28px;
}

.controls {
  display: flex;
  margin-left: auto;
}

.controls button {
  width: 46px;
  display: grid;
  place-items: center;
}

.controls svg {
  width: 10px;
  height: 10px;
  fill: none;
  stroke: #000;
}

.tabs {
  display: flex;
  height: 24px;
  border-bottom: 1px solid #dadbdc;
}

.tabs button {
  width: 57px;
  height: 23px;
  color: #2b2b2b;
}

.tabs .file {
  width: 56px;
  background: #0063b1;
  color: #fff;
}

.tabs .current {
  width: 58px;
  height: 24px;
  margin-right: 1px;
  background: #f5f6f7;
  border: 1px solid #dadbdc;
  border-bottom: none;
}

.tabs .picture-tools {
  width: 95px;
  border: solid #dadbdc;
  border-width: 0 1px;
}

.tabs .collapse {
  width: 16px;
  margin-left: auto;
  color: #999;
}

.collapse svg {
  width: 14px;
  height: 14px;
}

.tabs .help {
  width: 16px;
  height: 16px;
  margin: 3px 3px 0 6px;
  border-radius: 50%;
  background: #0063b1;
  color: #fff;
  font-weight: bold;
}

/* Ribbon */
.ribbon {
  display: flex;
  height: 92px;
  background: #f5f6f7;
  border-bottom: 1px solid #dadbdc;
  color: #222;
}

.group {
  display: flex;
  flex-direction: column;
  padding: 4px 0 2px;
  border-right: 1px solid #e2e3e4;
}

.group h2 {
  padding-right: 3px;
  text-align: center;
  color: #5a5a5a;
}

.tools {
  flex: 1;
  display: flex;
}

.clipboard { width: 263px; }
.clipboard .tools { gap: 3px; padding-left: 7px; }
.organize { width: 165px; }
.new { width: 83px; }
.opening { width: 133px; }
.select { width: 115px; }

.big {
  display: flex;
  flex-direction: column;
  align-items: center;
  width: 40px;
  padding-top: 4px;
  line-height: 13px;
}

.big svg {
  width: 32px;
  height: 32px;
  margin-bottom: 3px;
}

.big.wide {
  width: 63px;
}

.new .big {
  width: 50px;
}

.opening .big {
  width: 64px;
}

.stack {
  display: flex;
  flex-direction: column;
  align-items: flex-start;
}

.stack button {
  display: flex;
  align-items: center;
  gap: 3px;
  height: 22px;
  padding-bottom: 1px;
  white-space: nowrap;
}

.opening .stack { padding-left: 1px; }
.select .stack { padding-left: 7px; }

.loose {
  gap: 7px;
  padding: 8px 5px 0 8px;
}

.ruled {
  border-left: 1px solid #e2e3e4;
  padding-left: 6px;
}

.caret::after {
  content: "";
  border: 3px solid transparent;
  border-top-color: currentColor;
  border-bottom: 0;
}

.big.caret::after {
  margin-top: 5px;
}

.red svg {
  color: #d0021b;
}

.ribbon button:disabled {
  color: #757575;
}

.window-back button:disabled svg {
  color: #3c5788;
  filter: grayscale(1) sepia(0.6) hue-rotate(180deg) opacity(0.8);
}

/* Address row */
.location {
  display: flex;
  align-items: center;
  height: 34px;
  padding: 0 12px 0 11px;
  color: #666;
}

.location > button {
  width: 16px;
  margin-right: 12px;
}

.location > button:disabled {
  color: #d0d0d0;
}

.location .recent {
  width: 10px;
  margin-right: 8px;
}

.recent svg {
  width: 10px;
}

.location > button:nth-child(4) {
  margin-right: 5px;
}

.address {
  flex: 1;
  height: 22px;
  display: flex;
  align-items: center;
  border: 1px solid #d9d9d9;
  padding-left: 2px;
  color: #000;
}

.address em {
  width: 5px;
  height: 5px;
  margin: 0 10px 0 6px;
  border: solid #666;
  border-width: 1px 1px 0 0;
  transform: rotate(45deg);
}

.address .history {
  width: 16px;
  margin-left: auto;
  color: #666;
}

.address .history svg {
  width: 13px;
}

.address .refresh {
  width: 18px;
  height: 20px;
  padding-left: 1px;
  border-left: 1px solid #d9d9d9;
  color: #555;
}

.refresh svg {
  height: 14px;
}

.search {
  display: flex;
  align-items: center;
  width: 202px;
  height: 22px;
  margin-left: 12px;
  padding: 0 6px 0 8px;
  border: 1px solid #d9d9d9;
}

.search input {
  flex: 1;
  min-width: 0;
  outline: none;
}

.search input::placeholder {
  color: #6d6d6d;
}

/* Window body */
.body {
  flex: 1;
  min-height: 0;
  display: flex;
  padding-top: 1px;
}

.tree {
  width: 140px;
  overflow: hidden;
}

.tree a {
  display: flex;
  align-items: center;
  gap: 5px;
  height: 24px;
  padding: 0 0 2px 40px;
  white-space: nowrap;
}

.tree .root a {
  padding-left: 32px;
}

.tree .selected {
  width: 139px;
  background: #d9d9d9;
}

.scrollbar {
  display: flex;
  flex-direction: column;
  align-items: center;
  width: 16px;
  padding: 2px 0 1px;
  background: #f0f0f0;
  color: #505050;
}

.scrollbar svg {
  width: 13px;
}

.scrollbar span {
  width: 15px;
  height: 117px;
  margin-top: auto;
  margin-bottom: 173px;
  background: #cdcdcd;
}

.scrollbar.low span {
  margin-bottom: 76px;
}

.files {
  flex: 1;
  display: grid;
  grid-template-columns: repeat(auto-fill, 74px);
  gap: 1px 2px;
  align-content: start;
  align-items: start;
  padding: 6px 0 0 18px;
}

.files a {
  padding: 1px 0 3px;
  text-align: center;
}

.files svg {
  width: 48px;
  height: 48px;
  margin: 0 0 1px 13px;
}

.files .hover {
  background: #e5f3ff;
}

.files .chosen {
  background: #cce8ff;
  outline: 1px solid #99d1ff;
  outline-offset: -1px;
}

.status {
  display: flex;
  align-items: center;
  gap: 21px;
  height: 24px;
  padding: 0 7px 0 14px;
  color: #1e395b;
}

.status button {
  margin-left: auto;
}

.status button + button {
  margin-left: -15px;
}

/* Details list */
.details {
  flex: 1;
  min-width: 0;
  display: flex;
  flex-direction: column;
  justify-content: space-between;
  padding-left: 13px;
}

table {
  border-collapse: collapse;
  table-layout: fixed;
  width: 100%;
}

th {
  position: relative;
  height: 25px;
  padding: 0 0 0 8px;
  font-weight: normal;
  text-align: left;
  color: #4c607a;
}

th:first-child {
  width: 262px;
  border-right: 1px solid #e5e5e5;
}

th:last-child,
td:last-child {
  padding-left: 7px;
}

.sort {
  position: absolute;
  left: 126px;
  top: -3px;
  width: 12px;
  height: 12px;
}

tbody::before {
  content: "";
  display: block;
  height: 6px;
}

td {
  height: 21px;
  padding: 0 0 0 8px;
}

td:last-child {
  color: #6d6d6d;
}

td svg {
  display: inline-block;
  margin-right: 5px;
  vertical-align: -4px;
}

.hscroll {
  display: flex;
  align-items: center;
  height: 16px;
  margin-left: -9px;
  background: #f0f0f0;
  color: #505050;
}

.hscroll span {
  flex: 1;
  height: 16px;
  background: #cdcdcd;
}

/* Watermark */
.watermark {
  position: absolute;
  right: 46px;
  bottom: 9px;
  display: flex;
  align-items: center;
  gap: 4px;
  color: #fff;
  opacity: 0.8;
  font: 35px/62px Roboto, sans-serif;
  text-shadow: 0 0 4px rgba(0, 0, 0, 0.6);
}

.watermark svg {
  width: 56px;
  height: 62px;
  filter: drop-shadow(0 0 2px rgba(0, 0, 0, 0.5));
}

/* Taskbar */
.taskbar {
  display: flex;
  height: 40px;
  background: linear-gradient(90deg, #001720, #00141f 50%, #000a18);
  color: #fff;
}

.start,
.app {
  width: 48px;
  display: grid;
  place-items: center;
}

.app {
  width: 50px;
}

.app svg {
  width: 24px;
  height: 24px;
}

.app .small {
  width: 17px;
  height: 16px;
}

.app.active {
  width: 48px;
  background: #33454f;
  box-shadow: inset 0 -2px #76b9ed;
}

.find {
  position: relative;
  display: flex;
  align-items: center;
  gap: 10px;
  width: 288px;
  padding-left: 12px;
  background: #f2f1f1;
  border: 1px solid #c8c8c8;
  color: #333;
}

.find input {
  flex: 1;
  min-width: 0;
  font-size: 14px;
  outline: none;
}

.find input::placeholder {
  color: #333;
}

.find .flowers {
  position: absolute;
  right: 0;
  bottom: 0;
  width: 80px;
  height: 38px;
}

.tray {
  display: flex;
  align-items: center;
  gap: 8px;
  margin-left: auto;
  padding-right: 4px;
}

.tray svg {
  fill: none;
  stroke: #fff;
}

.tray time {
  margin-left: 5px;
  text-align: center;
  line-height: 18px;
}

.tray .notes {
  margin: 0 12px;
}

.tray i {
  width: 1px;
  height: 40px;
  background: #4a5560;
}
```
